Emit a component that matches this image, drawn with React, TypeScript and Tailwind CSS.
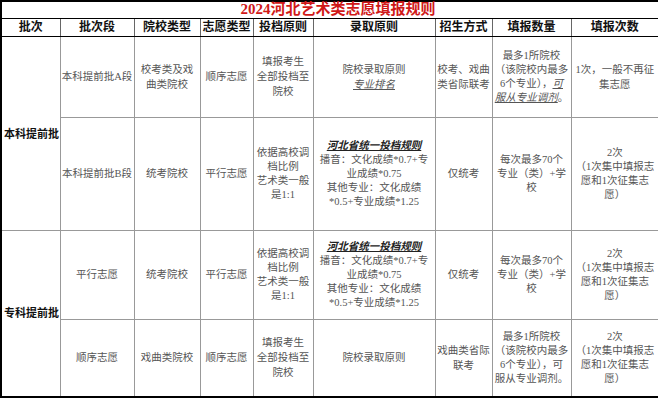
import React from 'react';

const font = { fontFamily: '"Liberation Serif", "Noto Sans CJK SC", serif' };

const cols = [59, 74, 66, 53, 60, 122, 57, 79, 88];

const headers = ['批次', '批次段', '院校类型', '志愿类型', '投档原则', '录取原则', '招生方式', '填报数量', '填报次数'];

// Shared cell contents
const tongYi = (
  <div className="leading-[14px]">
    <div className="font-bold italic underline text-[#222]">河北省统一投档规则</div>
    <div>播音：文化成绩*0.7+专</div>
    <div>业成绩*0.75</div>
    <div>其他专业：文化成绩</div>
    <div>*0.5+专业成绩*1.25</div>
  </div>
);

const yiJu = (
  <div className="leading-[14px]">
    依据高校调
    <br />
    档比例
    <br />
    艺术类一般
    <br />
    是1:1
  </div>
);

const tianBao = (
  <div className="leading-[15px]">
    填报考生
    <br />
    全部投档至
    <br />
    院校
  </div>
);

const meiCi = (
  <div className="leading-[14px]">
    每次最多70个
    <br />
    专业（类）+学
    <br />
    校
  </div>
);

const erCi = (
  <div className="leading-[14px]">
    2次
    <br />
    （1次集中填报志
    <br />
    愿和1次征集志
    <br />
    愿）
  </div>
);

const td = 'border border-[#999] px-0 text-center align-middle whitespace-nowrap';

export default function App() {
  return (
    <div className="w-[658px] h-[400px] bg-white text-[#555] text-[10.5px]" style={font}>
      <table className="table-fixed border-collapse w-[657px] border-2 border-black">
        <colgroup>
          {cols.map((w, i) => (
            <col key={i} style={{ width: w }} />
          ))}
        </colgroup>
        <tbody>
          <tr className="h-[17px]">
            <td colSpan={9} className="border-b border-black text-center text-[15px] font-bold text-[#d01818] leading-[15px] pl-[16px]">
              2024河北艺术类志愿填报规则
            </td>
          </tr>
          <tr className="h-[18px]">
            {headers.map((h) => (
              <td key={h} className="border border-[#666] border-b-black text-center font-bold text-[12px] text-[#111] leading-[16px]">
                {h}
              </td>
            ))}
          </tr>
          <tr className="h-[81px]">
            <td rowSpan={2} className="border border-[#999] border-l-black text-left align-middle font-bold text-[#111] text-[11px] pl-[2px] pt-[2px] whitespace-nowrap">
              本科提前批
            </td>
            <td className={td}>本科提前批A段</td>
            <td className={td}>
              <div className="leading-[15px]">
                校考类及戏
                <br />
                曲类院校
              </div>
            </td>
            <td className={td}>顺序志愿</td>
            <td className={td}>{tianBao}</td>
            <td className={td}>
              <div className="leading-[15px]">
                院校录取原则
                <br />
                <span className="italic underline">专业排名</span>
              </div>
            </td>
            <td className={td}>
              <div className="leading-[15px]">
                校考、戏曲
                <br />
                类省际联考
              </div>
            </td>
            <td className={td}>
              <div className="leading-[14px]">
                最多1所院校
                <br />
                （该院校内最多
                <br />
                6个专业），<span className="italic underline">可</span>
                <br />
                <span className="italic underline">服从专业调剂</span>。
              </div>
            </td>
            <td className={td}>
              <div className="leading-[15px]">
                1次，一般不再征
                <br />
                集志愿
              </div>
            </td>
          </tr>
          <tr className="h-[113px]">
            <td className={td}>本科提前批B段</td>
            <td className={td}>统考院校</td>
            <td className={td}>平行志愿</td>
            <td className={td}>{yiJu}</td>
            <td className={td}>{tongYi}</td>
            <td className={td}>仅统考</td>
            <td className={td}>{meiCi}</td>
            <td className={td}>{erCi}</td>
          </tr>
          <tr className="h-[89px]">
            <td rowSpan={2} className="border border-[#999] border-l-black text-left align-middle font-bold text-[#111] text-[11px] pl-[2px] whitespace-nowrap">
              专科提前批
            </td>
            <td className={td}>平行志愿</td>
            <td className={td}>统考院校</td>
            <td className={td}>平行志愿</td>
            <td className={td}>{yiJu}</td>
            <td className={td}>{tongYi}</td>
            <td className={td}>仅统考</td>
            <td className={td}>{meiCi}</td>
            <td className={td}>{erCi}</td>
          </tr>
          <tr className="h-[78px]">
            <td className={td}>顺序志愿</td>
            <td className={td}>戏曲类院校</td>
            <td className={td}>顺序志愿</td>
            <td className={td}>{tianBao}</td>
            <td className={td}>院校录取原则</td>
            <td className={td}>
              <div className="leading-[15px]">
                戏曲类省际
                <br />
                联考
              </div>
            </td>
            <td className={td}>
              <div className="leading-[14px]">
                最多1所院校
                <br />
                （该院校内最多
                <br />
                6个专业），可
                <br />
                服从专业调剂。
              </div>
            </td>
            <td className={td}>{erCi}</td>
          </tr>
        </tbody>
      </table>
    </div>
  );
}
